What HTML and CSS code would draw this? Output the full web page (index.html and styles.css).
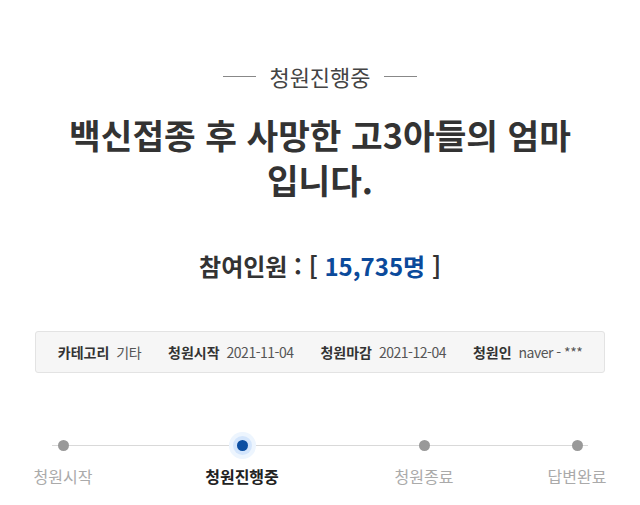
FILE: index.html
```html
<!DOCTYPE html>
<html lang="ko">
<head>
<meta charset="utf-8">
<link rel="stylesheet" href="styles.css">
</head>
<body>
<div class="page">
  <div class="status"><span class="dash"></span><span class="status-text">청원진행중</span><span class="dash"></span></div>
  <h1 class="title">백신접종 후 사망한 고3아들의 엄마<br>입니다.</h1>
  <div class="count">참여인원 : [ <span class="num">15,735명</span> ]</div>
  <div class="info">
    <div class="item"><span class="lbl">카테고리</span><span class="val">기타</span></div>
    <div class="item"><span class="lbl">청원시작</span><span class="val">2021-11-04</span></div>
    <div class="item"><span class="lbl">청원마감</span><span class="val">2021-12-04</span></div>
    <div class="item"><span class="lbl">청원인</span><span class="val">naver - ***</span></div>
  </div>
  <div class="steps">
    <div class="step s1"><span class="dot"></span><span class="step-label">청원시작</span></div>
    <div class="step s2 active"><span class="dot"></span><span class="step-label">청원진행중</span></div>
    <div class="step s3"><span class="dot"></span><span class="step-label">청원종료</span></div>
    <div class="step s4"><span class="dot"></span><span class="step-label">답변완료</span></div>
  </div>
</div>
</body>
</html>
```
FILE: styles.css
```css
html, body {
  margin: 0;
  padding: 0;
  background: #fff;
}
body {
  font-family: "Noto Sans CJK KR", "Noto Sans", sans-serif;
  color: #333;
}
.page {
  width: 640px;
  height: 505px;
  overflow: hidden;
}
.status {
  display: flex;
  justify-content: center;
  align-items: center;
  gap: 13px;
  padding-top: 61px;
  height: 30px;
}
.dash {
  width: 33px;
  height: 1px;
  background: #888;
}
.status-text {
  font-size: 22px;
  line-height: 30px;
  color: #444;
}
.title {
  margin: 21px 0 0;
  text-align: center;
  font-size: 34.4px;
  line-height: 45px;
  font-weight: 700;
  color: #333;
}
.count {
  margin-top: 48px;
  text-align: center;
  font-size: 24px;
  line-height: 32px;
  font-weight: 700;
  color: #333;
}
.num {
  color: #0b4a9b;
}
.info {
  margin: 49px 35px 0;
  height: 40px;
  border: 1px solid #e3e3e3;
  border-radius: 3px;
  background: #f6f6f6;
  display: flex;
  justify-content: center;
  align-items: center;
  gap: 27px;
  font-size: 14px;
}
.item {
  display: flex;
  align-items: center;
  gap: 7px;
}
.lbl {
  font-weight: 700;
  color: #333;
}
.val {
  color: #555;
  letter-spacing: -0.5px;
}
.steps {
  position: relative;
  margin-top: 60px;
  display: flex;
  height: 60px;
}
.steps::before {
  content: "";
  position: absolute;
  left: 52px;
  right: 52px;
  top: 12px;
  height: 1px;
  background: #d9d9d9;
}
.step {
  position: relative;
  width: 100px;
  display: flex;
  flex-direction: column;
  align-items: center;
}
.s1 { margin-left: 13px; }
.s2 { margin-left: 79px; }
.s3 { margin-left: 82px; }
.s4 { margin-left: 53px; }
.dot {
  width: 11px;
  height: 11px;
  border-radius: 50%;
  background: #999;
  margin-top: 7px;
}
.active .dot {
  background: #0b4ea2;
  box-shadow: 0 0 0 4px #d3e5fc, 0 0 0 8px #edf5fe;
}
.step-label {
  margin-top: 14px;
  font-size: 16px;
  line-height: 22px;
  color: #aaa;
  white-space: nowrap;
}
.active .step-label {
  color: #222;
  font-weight: 700;
}
```
